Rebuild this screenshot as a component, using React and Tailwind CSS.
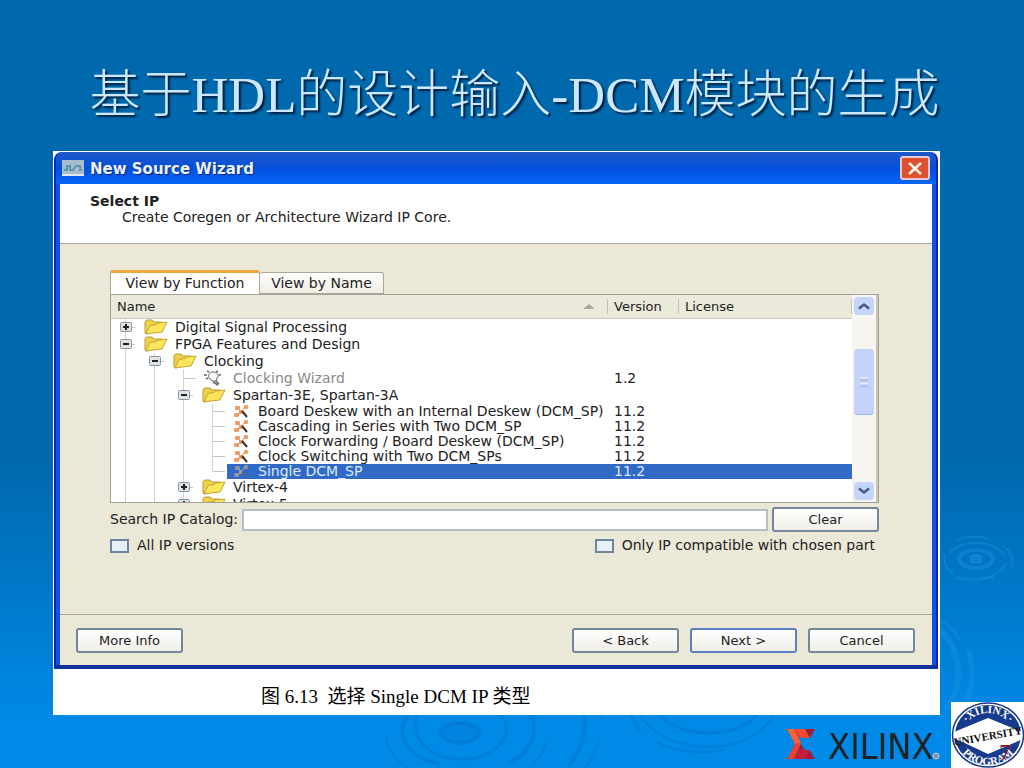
import { clsx } from "clsx"

const rows = [
    { label: "Digital Signal Processing", depth: 0, box: "plus", icon: "folder" },
    { label: "FPGA Features and Design", depth: 0, box: "minus", icon: "folder" },
    { label: "Clocking", depth: 1, box: "minus", icon: "folder" },
    { label: "Clocking Wizard", depth: 2, icon: "bulb", version: "1.2", muted: true },
    { label: "Spartan-3E, Spartan-3A", depth: 2, box: "minus", icon: "folder" },
    { label: "Board Deskew with an Internal Deskew (DCM_SP)", depth: 3, icon: "core", version: "11.2" },
    { label: "Cascading in Series with Two DCM_SP", depth: 3, icon: "core", version: "11.2" },
    { label: "Clock Forwarding / Board Deskew (DCM_SP)", depth: 3, icon: "core", version: "11.2" },
    { label: "Clock Switching with Two DCM_SPs", depth: 3, icon: "core", version: "11.2" },
    { label: "Single DCM_SP", depth: 3, icon: "core", version: "11.2", selected: true, last: true },
    { label: "Virtex-4", depth: 2, box: "plus", icon: "folder" },
    { label: "Virtex-5", depth: 2, box: "plus", icon: "folder" },
]

function Ripples() {
    return (
        <svg className="absolute right-0 bottom-0 w-[1024px] h-[768px]" viewBox="0 0 1024 768" fill="none" aria-hidden="true">
            <g stroke="#1b93e0" strokeOpacity="0.4">
                <ellipse cx="976" cy="559" rx="6" ry="4" fill="#1b93e0" fillOpacity="0.4" strokeWidth="2" />
                <ellipse cx="976" cy="559" rx="17" ry="9" strokeWidth="4" />
                <path d="M949 553c6-7 16-10 27-10 14 0 26 6 29 14M1006 562c-3 9-12 15-24 16" strokeWidth="2" />
                <path d="M945 553c-2 9 1 16 9 21M956 578c12 2 26 2 38-1M956 540c12-4 24-4 34-1M1003 546c9 6 11 14 8 21" strokeWidth="2" />
                <path d="M940 630c22 20 24 54 6 80" strokeWidth="6" />
                <path d="M968 650c6 18 5 36-2 52" strokeWidth="5" />
                <path d="M940 620c10 5 16 12 20 20" strokeWidth="2" />
            </g>
            <g stroke="#0066b8" strokeOpacity="0.3">
                <ellipse cx="460" cy="733" rx="19" ry="10" fill="#0066b8" fillOpacity="0.15" strokeWidth="4" />
                <path d="M420 712c-10 13-3 32 14 41 25 12 58 6 69-13 6-10 4-21-6-28" strokeWidth="3" />
                <path d="M408 714c-14 20 0 45 32 50M531 714c9 17 0 39-22 49" strokeWidth="4" />
                <path d="M386 738c2 12 10 22 22 30M546 742c-2 8-6 15-12 21" strokeWidth="2" />
                <path d="M584 714c4 20-4 38-16 53" strokeWidth="4" />
                <path d="M600 738c-3 12-8 22-16 30M598 714l4 5" strokeWidth="2" />
                <path d="M660 714c14 24 80 26 97 0" strokeWidth="3" />
                <path d="M640 714c24 44 112 44 134 0M630 714c3 7 6 12 11 18" strokeWidth="2" />
                <path d="M657 742c20 11 50 13 68 7" strokeWidth="2" />
            </g>
        </svg>
    )
}

function Guide({ height, line, turn, box, last }) {
    const mid = Math.floor(height / 2)
    return (
        <svg className="shrink-0" width="29" height={height} fill="none" aria-hidden="true">
            {line && <path d={`M14.5 0V${last ? mid : height}`} stroke="#d2d2d2" />}
            {turn && <path d={`M14.5 ${mid + 0.5}H27`} stroke="#c6c6c6" />}
            {box && (
                <g>
                    <path d={`M20 ${mid + 0.5}H24`} stroke="#c6c6c6" />
                    <rect x="9.5" y={mid - 4.5} width="11" height="9" rx="1" fill="#e2e2e0" stroke="#8496ab" />
                    <path d={`M12 ${mid}H18`} stroke="#222" strokeWidth="2" />
                    {box === "plus" && <path d={`M15 ${mid - 3}V${mid + 3}`} stroke="#222" strokeWidth="2" />}
                </g>
            )}
        </svg>
    )
}

function NodeIcon({ name, selected }) {
    if (name === "folder") {
        return (
            <svg className="ml-1 w-[31px] h-4 shrink-0" viewBox="0 0 31 16" aria-hidden="true">
                <path d="M1 2.5 3 1h5l2 2h8l1 2v4L3 15l-2-1z" fill="#eed04c" stroke="#b99a2e" />
                <path d="M2 15 6 6.500l6-1 2-1.500 9-1-5 10-9 1z" fill="#fbe55c" stroke="#c7a52f" />
            </svg>
        )
    }
    if (name === "bulb") {
        return (
            <svg className="ml-1 w-[31px] h-4 shrink-0" viewBox="0 0 31 16" fill="none" stroke="#666" aria-hidden="true">
                <path d="M8 9C5 6 7 2 11 2s7 3 4 6l-1 3h-3z" fill="#fafafa" />
                <path d="M11 12l5 3M14 11l3 3M2 5h3M5 1l2 1M16 1l-2 1M17 5h2M4 9l2-1" strokeWidth="1.500" />
            </svg>
        )
    }
    return (
        <svg className="ml-1 w-[27px] h-[15px] shrink-0" viewBox="0 0 27 15" aria-hidden="true">
            <g fill={selected ? "#8f8ea0" : "#f0a067"}>
                <rect x="4" y="2" width="5" height="4" rx="1" />
                <rect x="13" y="1" width="4" height="4" rx="1" />
                <rect x="3" y="9" width="5" height="4" rx="1" />
                <rect x="8" y="6" width="4" height="4" rx="1" />
            </g>
            <path d="M6 4l4 4-4 3M10 8l4-5" stroke={selected ? "#b3b0b5" : "#e8884e"} fill="none" />
            <path d="M11 7l5 6" stroke={selected ? "#55608a" : "#3d3030"} strokeWidth="2" />
        </svg>
    )
}

function TreeRow({ row }) {
    const leaf = row.depth === 3
    const height = leaf ? 15 : 17
    const guides = Array.from({ length: row.depth + 1 }, (_, i) => i)

    return (
        <tr className={leaf ? "h-[15px]" : "h-[17px]"}>
            <td className="p-0">
                <div className="flex items-center">
                    {guides.map((i) => (
                        <Guide
                            key={i}
                            height={height}
                            line
                            turn={i === row.depth && !row.box}
                            box={i === row.depth && row.box}
                            last={i === row.depth && row.last}
                        />
                    ))}
                    <div
                        className={clsx(
                            "flex flex-1 items-center whitespace-nowrap",
                            leaf ? "h-[15px]" : "h-[17px]",
                            row.selected && "bg-[#316ac5] text-[#dce8ff]",
                            row.muted && "text-[#8a8a8a]"
                        )}
                    >
                        <NodeIcon name={row.icon} selected={row.selected} />
                        {row.label}
                    </div>
                </div>
            </td>
            <td className={clsx("p-0 pl-1.5", row.selected && "bg-[#316ac5] text-[#dce8ff]")}>{row.version}</td>
            <td className={clsx("p-0", row.selected && "bg-[#316ac5]")}></td>
        </tr>
    )
}

function ScrollButton({ label, d }) {
    return (
        <button type="button" aria-label={label} className="flex h-[18px] w-5 items-center justify-center rounded-sm bg-[#c5d5fa]">
            <svg width="12" height="8" viewBox="0 0 12 8" fill="none" aria-hidden="true">
                <path d={d} stroke="#40588c" strokeWidth="2.500" />
            </svg>
        </button>
    )
}

function Catalog() {
    return (
        <div className="flex h-[209px] border border-[#a3a296] bg-white">
            <div className="min-w-0 flex-1 overflow-hidden">
                <table className="w-full table-fixed border-collapse text-left">
                    <colgroup>
                        <col />
                        <col className="w-[71px]" />
                        <col className="w-[173px]" />
                    </colgroup>
                    <thead className="text-[13px]">
                        <tr className="h-[23px] border-b border-[#cbc7b8] bg-[#ebe9da]">
                            <th className="p-0 pl-1.5 font-normal">
                                <div className="flex items-center justify-between border-r border-[#c5c2b2] pr-3">
                                    Name
                                    <svg width="12" height="5" viewBox="0 0 12 5" aria-hidden="true">
                                        <path d="M6 0l6 5H0z" fill="#aca899" />
                                    </svg>
                                </div>
                            </th>
                            <th className="p-0 pl-1.5 font-normal"><div className="border-r border-[#c5c2b2]">Version</div></th>
                            <th className="p-0 pl-1.5 font-normal"><div className="border-r border-[#c5c2b2]">License</div></th>
                        </tr>
                    </thead>
                    <tbody>
                        {rows.map((row) => <TreeRow key={row.label} row={row} />)}
                    </tbody>
                </table>
            </div>
            <div className="flex w-[26px] flex-col items-center border-r-2 border-[#c9c6b6] bg-[#f6f5f0] py-0.5">
                <ScrollButton label="Scroll up" d="M1 6.500l5-4 5 4" />
                <div className="mt-[34px] flex h-[66px] w-5 flex-col items-center justify-center gap-0.5 rounded-sm border-b border-[#9cb3ea] bg-[#c5d3fb]">
                    <span className="h-px w-2 bg-[#eef3ff]"></span>
                    <span className="h-px w-2 bg-[#9fb5ee]"></span>
                    <span className="h-px w-2 bg-[#eef3ff]"></span>
                    <span className="h-px w-2 bg-[#9fb5ee]"></span>
                </div>
                <div className="mt-auto">
                    <ScrollButton label="Scroll down" d="M1 1.500l5 4 5-4" />
                </div>
            </div>
        </div>
    )
}

function XpButton({ children, focused }) {
    return (
        <button
            type="button"
            className={clsx(
                "h-[25px] w-[107px] rounded-[3px] border-2 bg-linear-to-b from-white to-[#efeee8] text-[13px]",
                focused ? "border-[#5b80c6]" : "border-[#75889b]"
            )}
        >
            {children}
        </button>
    )
}

function CheckOption({ children }) {
    return (
        <label className="flex items-center gap-2">
            <input type="checkbox" className="h-3.5 w-[19px] appearance-none border-2 border-[#6b869e] bg-[#e6f0f4]" />
            {children}
        </label>
    )
}

function Wizard() {
    return (
        <section className="mr-0.5 ml-px rounded-t-lg border-x-2 border-b-4 border-x-[#0a28b4] border-b-[#10309c] bg-[#1450e4] font-['DejaVu_Sans',sans-serif] text-[14px] leading-[15px] text-[#222]">
            <div className="flex h-8 items-center gap-1.5 rounded-t-lg bg-linear-to-b from-[#1c58c8] via-[#0450dc] to-[#0564f8] pr-1.5 pl-1.5">
                <svg width="22" height="16" viewBox="0 0 22 16" aria-hidden="true">
                    <rect width="22" height="16" fill="#a9bccb" />
                    <path d="M2 10h3V6h3v4h3l3-4h4v4h2" fill="none" stroke="#5b97b0" strokeWidth="2" />
                    <path d="M0 15h22" stroke="#e4e8ee" strokeWidth="2" />
                </svg>
                <h2 className="flex-1 pt-0.5 text-[15px] font-bold text-[#eaf2ff] [text-shadow:1px_1px_1px_#0a2a80]">New Source Wizard</h2>
                <button type="button" aria-label="Close" className="flex h-6 w-[30px] items-center justify-center rounded-[3px] border-2 border-[#e9c8cf] bg-[#dc5030]">
                    <svg width="16" height="13" viewBox="0 0 16 13" aria-hidden="true">
                        <path d="M2 1l12 11M14 1L2 12" stroke="#fff4e8" strokeWidth="2.500" />
                    </svg>
                </button>
            </div>

            <div className="mx-1 bg-[#ebe8d7]">
                <header className="h-[60px] border-b border-[#a9a796] bg-white pt-2.5 pl-[30px]">
                    <h3 className="font-bold">Select IP</h3>
                    <p className="pt-px pl-8">Create Coregen or Architecture Wizard IP Core.</p>
                </header>

                <div className="h-[370px] pt-[26px] pr-[53px] pl-[50px]">
                    <div className="flex items-end" role="tablist">
                        <button type="button" role="tab" aria-selected="true" className="h-6 w-[150px] rounded-t-[3px] border-x border-t-3 border-x-[#aaa89c] border-t-[#eda63c] bg-white">
                            View by Function
                        </button>
                        <button type="button" role="tab" aria-selected="false" className="h-[22px] w-[124px] rounded-t-[3px] border border-l-0 border-[#aaa89c] bg-linear-to-b from-white to-[#efede2]">
                            View by Name
                        </button>
                    </div>

                    <Catalog />

                    <div className="mt-1 flex items-center gap-1">
                        <label htmlFor="search">Search IP Catalog:</label>
                        <input id="search" type="text" className="h-[22px] min-w-0 flex-1 border-2 border-[#b5bfc1] bg-white px-1" />
                        <XpButton>Clear</XpButton>
                    </div>
                    <div className="mt-1.5 flex justify-between pr-1">
                        <CheckOption>All IP versions</CheckOption>
                        <CheckOption>Only IP compatible with chosen part</CheckOption>
                    </div>
                </div>

                <footer className="flex h-[51px] items-center gap-[11px] border-t border-[#a9a796] pr-[17px] pl-4">
                    <XpButton>More Info</XpButton>
                    <span className="flex-1"></span>
                    <XpButton>&lt; Back</XpButton>
                    <XpButton focused>Next &gt;</XpButton>
                    <XpButton>Cancel</XpButton>
                </footer>
            </div>
        </section>
    )
}

function XilinxLogo() {
    return (
        <svg width="156" height="40" viewBox="0 0 156 40" role="img" aria-label="Xilinx">
            <path d="M0 1h18l-6 8 2 7-5 8H4l4-8z" fill="#e23a2c" />
            <path d="M0 1h7l7 14-6 1z" fill="#f4623c" />
            <path d="M8 1h10l5 9h-9z" fill="#f04a30" />
            <path d="M18 1h10l-5 9z" fill="#a31a38" />
            <path d="M8 16h6l-7 15H0z" fill="#e8452c" />
            <path d="M14 16l4 7h5l5 8H7z" fill="#a5183f" />
            <path d="M12 22h11l-5 9H8z" fill="#c4203a" />
            <text x="41" y="31" fontSize="36" fill="#1d2226" className="font-['DejaVu_Sans_Condensed','Roboto',sans-serif]">XILINX</text>
            <circle cx="149" cy="28" r="3" fill="#7d95a8" stroke="#c9c9c9" />
        </svg>
    )
}

function UniversityBadge() {
    return (
        <svg className="bg-white" width="73" height="66" viewBox="0 0 73 66" role="img" aria-label="Xilinx University Program">
            <defs>
                <path id="arc-top" d="M12 33a25 22 0 0 1 50 0" />
                <path id="arc-bottom" d="M5 33a32 30 0 0 0 64 0" />
            </defs>
            <ellipse cx="37" cy="33" rx="35.500" ry="32" fill="#fff" stroke="#173b8c" strokeWidth="1.500" />
            <ellipse cx="37" cy="33" rx="33" ry="30" fill="#173b8c" />
            <path d="M37 16l34 14-1 8-33 14L3 36v-6z" fill="#fff" />
            <g fill="#fff" fontSize="11" fontWeight="700" textAnchor="middle" className="font-['Liberation_Serif',serif]">
                <text><textPath href="#arc-top" startOffset="50%">·XILINX·</textPath></text>
                <text><textPath href="#arc-bottom" startOffset="50%">PROGRAM</textPath></text>
            </g>
            <text x="37" y="38" fontSize="11" fontWeight="700" fill="#111" textAnchor="middle" transform="rotate(-10 37 35)" className="font-['Liberation_Serif',serif]">UNIVERSITY</text>
            <text x="48" y="58" fontSize="24" fill="#8c1020" className="font-['Liberation_Serif',serif]">7</text>
        </svg>
    )
}

export default function App() {
    return (
        <main className="relative min-h-screen overflow-hidden bg-linear-to-b from-[#0069ae] from-60% to-[#008ae8] to-95%">
            <Ripples />

            <div className="relative pt-16 pr-[84px] pl-[53px]">
                <h1 className="flex h-[87px] justify-center pl-9 font-['Liberation_Serif','Noto_Sans_CJK_SC',serif] text-[51px] leading-[62px] font-light whitespace-nowrap text-[#cce8ff] [text-shadow:2px_2px_2px_#001c3a]">
                    基于HDL的设计输入-DCM模块的生成
                </h1>

                <figure className="bg-white pt-px">
                    <Wizard />
                    <figcaption className="h-[46px] pt-4 pl-[208px] font-['Liberation_Serif','Noto_Sans_CJK_SC',serif] text-[19px] leading-6 whitespace-pre text-black">
                        图 6.13  选择 Single DCM IP 类型
                    </figcaption>
                </figure>
            </div>

            <div className="absolute right-0 bottom-0 flex items-end gap-2">
                <XilinxLogo />
                <UniversityBadge />
            </div>
        </main>
    )
}
